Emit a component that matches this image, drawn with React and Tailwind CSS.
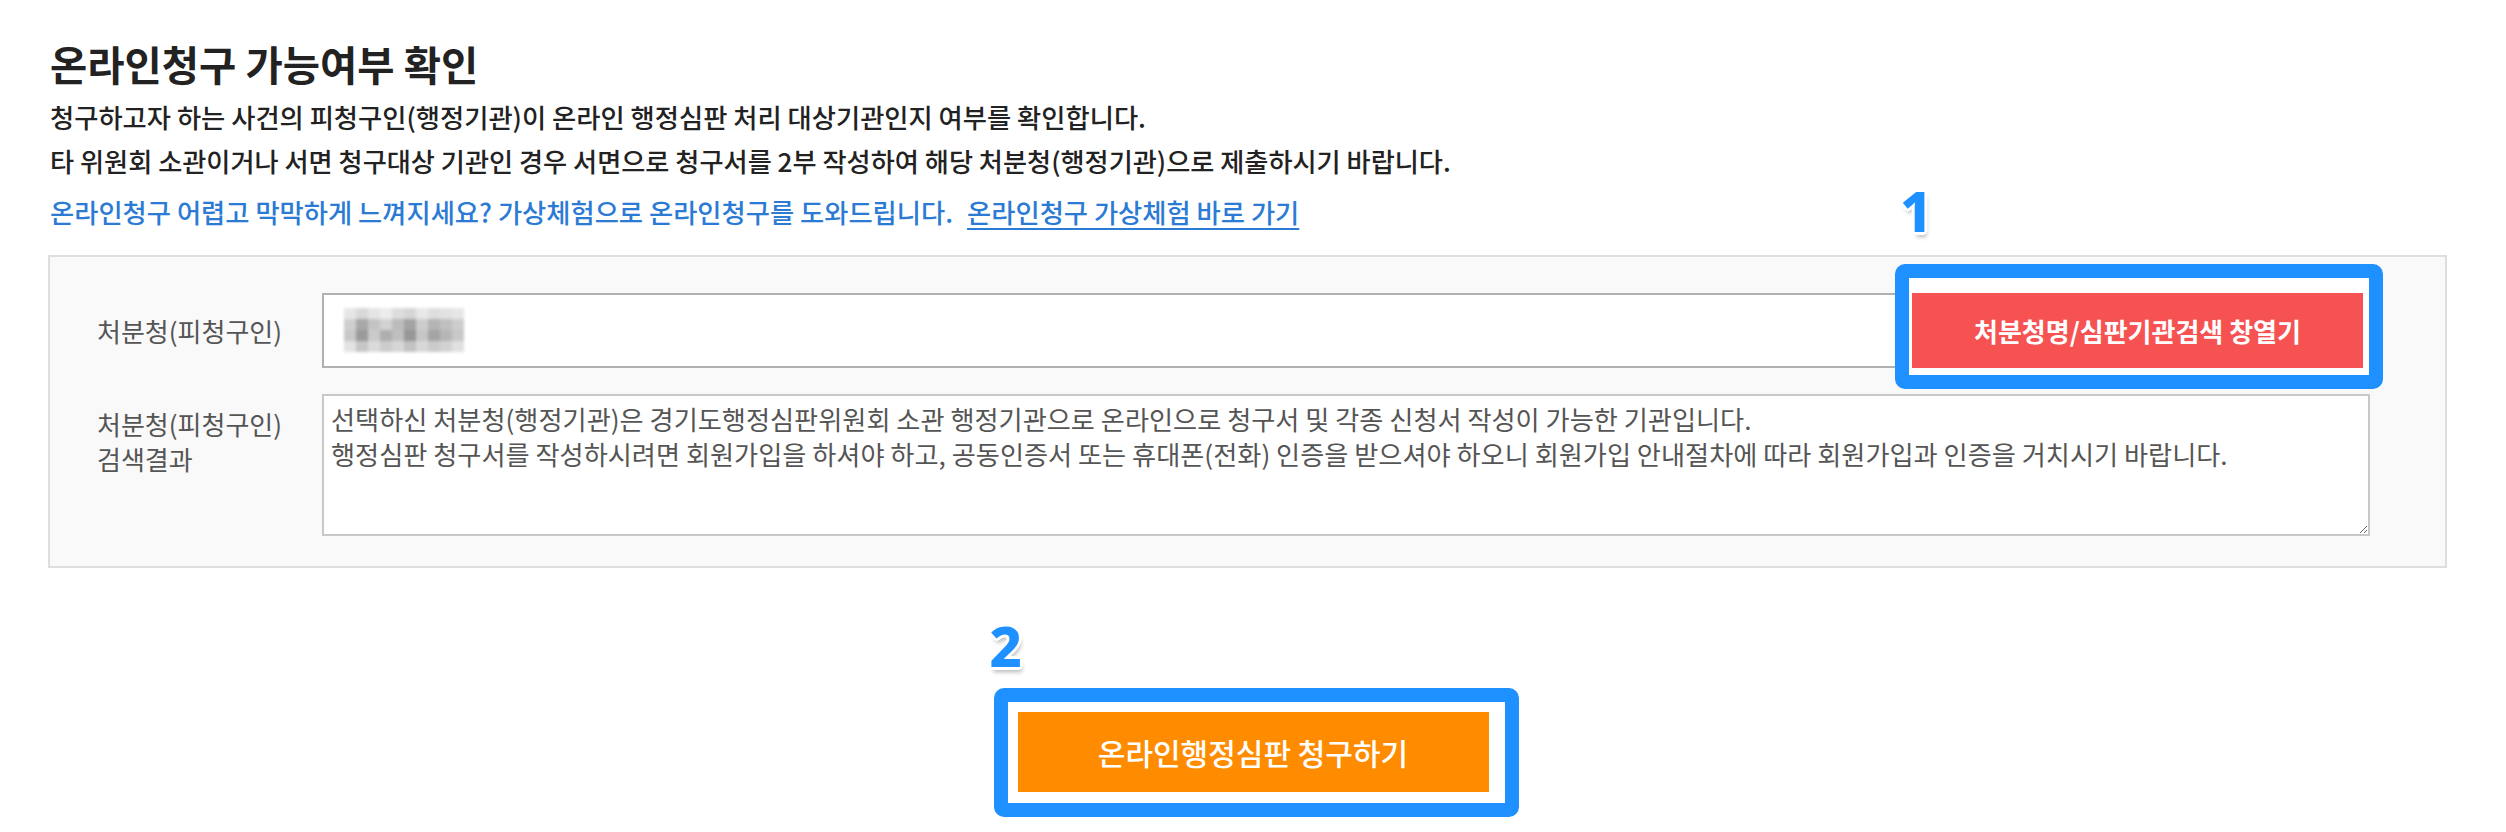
import React from "react";

const mosaic = [
  ["bg-[#e6e6e6]", "bg-[#d9d9d9]", "bg-[#e4e4e4]", "bg-[#ececec]", "bg-[#dddddd]", "bg-[#d6d6d6]", "bg-[#e8e8e8]", "bg-[#dedede]", "bg-[#e2e2e2]", "bg-[#e6e6e6]"],
  ["bg-[#cfcfcf]", "bg-[#a8a8a8]", "bg-[#c4c4c4]", "bg-[#d2d2d2]", "bg-[#bcbcbc]", "bg-[#a3a3a3]", "bg-[#cdcdcd]", "bg-[#b4b4b4]", "bg-[#c0c0c0]", "bg-[#cdcdcd]"],
  ["bg-[#c8c8c8]", "bg-[#9a9a9a]", "bg-[#cacaca]", "bg-[#aeaeae]", "bg-[#bfbfbf]", "bg-[#979797]", "bg-[#c6c6c6]", "bg-[#a4a4a4]", "bg-[#b6b6b6]", "bg-[#c8c8c8]"],
  ["bg-[#e2e2e2]", "bg-[#c6c6c6]", "bg-[#dadada]", "bg-[#cccccc]", "bg-[#d6d6d6]", "bg-[#c2c2c2]", "bg-[#d8d8d8]", "bg-[#cbcbcb]", "bg-[#d2d2d2]", "bg-[#e0e0e0]"],
];

function Marker({ n, className }) {
  return (
    <span
      className={
        "absolute font-['Noto_Sans',sans-serif] text-[56px] font-extrabold leading-none text-[#1e90ff] [text-shadow:3px_0_#fff,-3px_0_#fff,0_3px_#fff,0_-3px_#fff,2px_2px_#fff,-2px_2px_#fff,2px_-2px_#fff,-2px_-2px_#fff,2px_5px_4px_rgba(0,0,0,0.28)] " +
        className
      }
    >
      {n}
    </span>
  );
}

const resultText =
  "선택하신 처분청(행정기관)은 경기도행정심판위원회 소관 행정기관으로 온라인으로 청구서 및 각종 신청서 작성이 가능한 기관입니다.\n행정심판 청구서를 작성하시려면 회원가입을 하셔야 하고, 공동인증서 또는 휴대폰(전화) 인증을 받으셔야 하오니 회원가입 안내절차에 따라 회원가입과 인증을 거치시기 바랍니다.";

export default function App() {
  return (
    <div className="min-h-screen bg-white font-['Noto_Sans_CJK_KR','Noto_Sans',sans-serif] text-[#222]">
      <div className="pl-[50px] pr-[59px] pt-[40px]">
        <h1 className="text-[40.5px] font-bold leading-[48px]">온라인청구 가능여부 확인</h1>
        <p className="mt-[7px] text-[26.3px] font-medium leading-[44px]">
          청구하고자 하는 사건의 피청구인(행정기관)이 온라인 행정심판 처리 대상기관인지 여부를 확인합니다.
        </p>
        <p className="text-[26.2px] font-medium leading-[44px]">
          타 위원회 소관이거나 서면 청구대상 기관인 경우 서면으로 청구서를 2부 작성하여 해당 처분청(행정기관)으로 제출하시기 바랍니다.
        </p>
        <p className="mt-[7px] text-[26.3px] font-medium leading-[44px] text-[#2b7bd5]">
          온라인청구 어렵고 막막하게 느껴지세요? 가상체험으로 온라인청구를 도와드립니다.
          <a href="#" className="ml-[14px] underline underline-offset-[5px]">
            온라인청구 가상체험 바로 가기
          </a>
        </p>

        <div className="-ml-[2px] mt-[21px] border-2 border-[#dedede] bg-[#f9f9f9] pb-[30px] pl-[47px] pr-[75px] pt-[36px]">
          <div className="flex items-center">
            <div className="w-[225px] shrink-0 text-[26px] text-[#555]">처분청(피청구인)</div>
            <div className="flex flex-1 items-center gap-[12px]">
              <div className="h-[75px] flex-1 border-2 border-[#b0b0b0] bg-white pl-[20px] pt-[13px]">
                <div className="grid w-[120px] grid-cols-10 blur-[1.5px]">
                  {mosaic.map((row, i) =>
                    row.map((c, j) => <div key={i + "-" + j} className={"h-[11px] " + c} />)
                  )}
                </div>
              </div>
              <div className="relative mr-[7px] w-[451px]">
                <div className="absolute -bottom-[21px] -left-[17px] -right-[20px] -top-[29px] rounded-[10px] border-[14px] border-[#1e90ff] bg-white" />
                <Marker n="1" className="-left-[12px] -top-[111px]" />
                <button className="relative z-10 flex h-[75px] w-full items-center justify-center bg-[#f75252] text-[26px] font-bold text-white">
                  처분청명/심판기관검색 창열기
                </button>
              </div>
            </div>
          </div>

          <div className="mt-[26px] flex items-start">
            <div className="mt-[12px] w-[225px] shrink-0 text-[26px] leading-[35px] text-[#555]">
              처분청(피청구인)
              <br />
              검색결과
            </div>
            <textarea
              readOnly
              value={resultText}
              className="h-[142px] flex-1 resize border-2 border-[#c8c8c8] bg-white px-[7px] py-[6px] text-[26.2px] leading-[35px] text-[#555] outline-none"
            />
          </div>
        </div>
      </div>

      <div className="mt-[144px] flex justify-center">
        <div className="relative w-[471px]">
          <div className="absolute -bottom-[25px] -left-[24px] -right-[30px] -top-[24px] rounded-[10px] border-[14px] border-[#1e90ff] bg-white" />
          <Marker n="2" className="-left-[28px] -top-[95px]" />
          <button className="relative z-10 flex h-[80px] w-full items-center justify-center bg-[#ff8c00] text-[30px] font-medium text-white">
            온라인행정심판 청구하기
          </button>
        </div>
      </div>
    </div>
  );
}
